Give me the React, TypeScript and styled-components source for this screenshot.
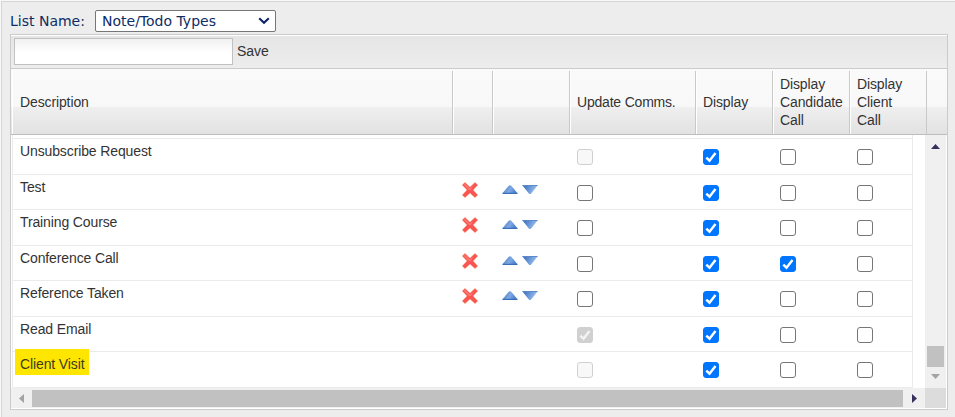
import React from 'react';
import styled, { createGlobalStyle, css } from 'styled-components';

const GlobalStyle = createGlobalStyle`
  * { box-sizing: border-box; }
  html, body { margin: 0; padding: 0; background: #f8f8f8; overflow: hidden; }
  body { font: 14px/18px "Liberation Sans", Arial, sans-serif; letter-spacing: -0.12px; color: #333; }
`;

const Page = styled.div`
  width: 955px;
  height: 417px;
  padding: 1px 0 0 1px;
`;

const Panel = styled.main`
  height: 416px;
  background: #ededed;
  border: 1px solid #d5d5d5;
  border-width: 1px 0 0 1px;
  padding: 8px 7px 0 8px;
`;

const ListBar = styled.label`
  display: flex;
  align-items: center;
  height: 22px;
  margin-bottom: 2px;
  font: 14px/20px "DejaVu Sans", Verdana, sans-serif;
  color: #0d2c66;
  letter-spacing: 0;
`;

const ListLabel = styled.span`
  width: 85px;
  white-space: nowrap;
`;

const Select = styled.span`
  display: flex;
  align-items: center;
  justify-content: space-between;
  width: 181px;
  height: 22px;
  padding: 0 5px 0 6px;
  background: #fff;
  border: 1px solid #767676;
  border-radius: 2px;
`;

const Grid = styled.section`
  display: flex;
  flex-direction: column;
  width: 938px;
  height: 376px;
  border: 1px solid #cbcbcb;
  background: #fff;
`;

const Toolbar = styled.div`
  display: flex;
  align-items: center;
  gap: 4px;
  flex: none;
  height: 34px;
  padding: 0 0 1px 3px;
  border-top: 1px solid #fff;
  border-bottom: 1px solid #cbcbcb;
  background: linear-gradient(#e5e5e5, #ededed);
`;

const NameInput = styled.input`
  width: 219px;
  height: 27px;
  border: 1px solid #c1c1c1;
  outline: none;
  background: linear-gradient(#f1f1f1, #fff 14px);
`;

const Save = styled.button`
  padding: 0;
  margin-top: -1px;
  border: 0;
  background: none;
  font: inherit;
  letter-spacing: 0;
  color: inherit;
`;

const Header = styled.div`
  display: grid;
  grid-template-columns: 441px 40px 77px 126px 77px 77px 77px 20px;
  flex: none;
  height: 66px;
  padding: 2px 0 0 1px;
  background: linear-gradient(#fafafa 0, #f8f8f8 38px, #efefef 38px, #e2e2e2 65px);
  border-bottom: 1px solid #bdbdbd;
`;

const HeadCell = styled.div`
  display: flex;
  align-items: center;
  padding: 0 12px 2px 6px;
  border-left: 1px solid #fff;
  border-right: 1px solid #c9c9c9;
  &:first-child { padding-left: 7px; }
  &:nth-child(4) { letter-spacing: -0.2px; }
  &:nth-child(6) { padding-right: 0; }
  &:last-child { border: 0; }
`;

const Viewport = styled.div`
  display: flex;
  flex: none;
  height: 253px;
`;

const Rows = styled.div`
  width: 902px;
  margin-right: 12px;
  padding-left: 1px;
`;

const Spacer = styled.div`
  height: 4px;
  border: 1px solid #ebebeb;
  border-width: 0 1px 1px 1px;
`;

const Row = styled.div`
  display: grid;
  grid-template-columns: 441px 40px 77px 126px 77px 77px 1fr;
  height: 35px;
  border: 1px solid #ebebeb;
  border-width: 0 1px 1px 1px;
  &:nth-child(even) { height: 36px; }
`;

const Description = styled.div`
  padding: 0 0 0 7px;
  line-height: 18px;
`;

const Mark = styled.span<{ $on: boolean }>`
  display: inline-block;
  height: 26px;
  margin: -3px 0 0 -5px;
  padding: 6px 5px 0;
  ${p => p.$on && css`background: #ffe600; color: #3e3b1e;`}
`;

const RemoveCell = styled.div`
  padding: 6px 0 0 7px;
`;

const MoveCell = styled.div`
  display: flex;
  gap: 4px;
  padding: 10px 0 0 8px;
`;

const CheckCell = styled.div`
  padding: 10px 0 0 6px;
`;

const Box = styled.span<{ $checked: boolean; $disabled: boolean }>`
  display: block;
  width: 16px;
  height: 16px;
  border: 1px solid ${p => (p.$disabled ? '#d0d0d0' : '#767676')};
  border-radius: 3px;
  background: ${p => (p.$disabled ? '#f8f8f8' : '#fff')};
  ${p => p.$checked && css`
    border-color: ${p.$disabled ? '#d0d0d0' : '#0075ff'};
    background: ${p.$disabled ? '#d0d0d0' : '#0075ff'};
    color: ${p.$disabled ? '#f3f3f3' : '#fff'};
  `}
  svg { display: block; }
`;

const VScroll = styled.div`
  display: flex;
  flex-direction: column;
  align-items: center;
  width: 21px;
  background: #f0f0f0;
`;

const VThumb = styled.div`
  width: 17px;
  height: 21px;
  margin-top: 197px;
  background: #c1c1c1;
`;

const HScroll = styled.div`
  display: flex;
  align-items: center;
  height: 20px;
  margin-right: 1px;
  background: #f0f0f0;
`;

const HThumb = styled.div`
  width: 871px;
  height: 17px;
  background: #c1c1c1;
`;

const Corner = styled.div`
  width: 21px;
  height: 20px;
  margin-left: auto;
  background: #dcdcdc;
`;

const Arrow = styled.svg`
  display: block;
  flex: none;
`;

const UpArrow = styled(Arrow)`margin-top: 9px;`;
const DownArrow = styled(Arrow)`margin-top: 7px;`;
const LeftArrow = styled(Arrow)`margin: 0 8px;`;
const RightArrow = styled(Arrow)`margin-left: 9px;`;

function Check({ on = false, disabled = false }: { on?: boolean; disabled?: boolean }) {
  return (
    <Box $checked={on} $disabled={disabled} role="checkbox" aria-checked={on} aria-disabled={disabled}>
      {on && (
        <svg width="14" height="14" viewBox="1 1 14 14" fill="none">
          <path d="M3.3 8.7 6.5 11.7 12.5 4" stroke="currentColor" strokeWidth="2.5" />
        </svg>
      )}
    </Box>
  );
}

function RemoveIcon() {
  return (
    <Arrow width="18" height="18" viewBox="0 0 18 18">
      <path d="M4 1.3 9 6l5-4.7 2.9 2.8L12.3 9l4.6 5-2.9 2.8L9 12.2l-5 4.6L1.1 14 5.8 9 1.1 4.1Z" fill="#fa5553" stroke="#f9c9a0" strokeWidth=".6" />
      <path d="m4.1 2.8 4.9 4.8 3-2.9L10 9H8L2.8 4.1Z" fill="#fb7874" />
    </Arrow>
  );
}

function MoveIcons() {
  return (
    <>
      <Arrow width="16" height="10" viewBox="0 0 16 10">
        <defs>
          <linearGradient id="up" x2="1" y2=".3"><stop stopColor="#3f72bd" /><stop offset=".6" stopColor="#7fa9e4" /><stop offset="1" stopColor="#4e82cc" /></linearGradient>
        </defs>
        <path d="M.5 8.2 6.7.8Q8-.3 9.3.8L15.5 8.2Z" fill="url(#up)" />
        <path d="M.5 8.4h15" stroke="#386fba" strokeWidth="1.2" />
      </Arrow>
      <Arrow width="16" height="10" viewBox="0 0 16 10">
        <defs>
          <linearGradient id="down" x2="1" y2=".3"><stop stopColor="#3467b4" /><stop offset=".65" stopColor="#76a2df" /><stop offset="1" stopColor="#a5c4ed" /></linearGradient>
        </defs>
        <path d="M.3.3h15.4L9.2 8.6Q8 9.6 6.8 8.6Z" fill="url(#down)" />
        <path d="M.5.5h15" stroke="#5b89cc" strokeWidth="1" />
      </Arrow>
    </>
  );
}

const headings = ['Description', '', '', 'Update Comms.', 'Display', 'Display Candidate Call', 'Display Client Call', ''];

type Item = { name: string; custom?: boolean; comms?: boolean; candidate?: boolean; marked?: boolean };

const items: Item[] = [
  { name: 'Unsubscribe Request' },
  { name: 'Test', custom: true },
  { name: 'Training Course', custom: true },
  { name: 'Conference Call', custom: true, candidate: true },
  { name: 'Reference Taken', custom: true },
  { name: 'Read Email', comms: true },
  { name: 'Client Visit', marked: true },
];

export default function App() {
  return (
    <Page>
      <GlobalStyle />
      <Panel>
        <ListBar>
          <ListLabel>List Name:</ListLabel>
          <Select>
            Note/Todo Types
            <svg width="12" height="8" viewBox="0 0 12 8" fill="none">
              <path d="m1.2 1.2 4.8 4.6 4.8-4.6" stroke="#0d2466" strokeWidth="2.1" />
            </svg>
          </Select>
        </ListBar>
        <Grid>
          <Toolbar>
            <NameInput aria-label="Description" />
            <Save>Save</Save>
          </Toolbar>
          <Header>
            {headings.map((text, i) => <HeadCell key={i}>{text}</HeadCell>)}
          </Header>
          <Viewport>
            <Rows>
              <Spacer />
              {items.map(item => (
                <Row key={item.name}>
                  <Description><Mark $on={!!item.marked}>{item.name}</Mark></Description>
                  <RemoveCell>{item.custom && <RemoveIcon />}</RemoveCell>
                  <MoveCell>{item.custom && <MoveIcons />}</MoveCell>
                  <CheckCell><Check on={item.comms} disabled={!item.custom} /></CheckCell>
                  <CheckCell><Check on /></CheckCell>
                  <CheckCell><Check on={item.candidate} /></CheckCell>
                  <CheckCell><Check /></CheckCell>
                </Row>
              ))}
            </Rows>
            <VScroll>
              <UpArrow width="9" height="5" viewBox="0 0 9 5"><path d="M0 5 4.5 0 9 5Z" fill="#37305c" /></UpArrow>
              <VThumb />
              <DownArrow width="9" height="5" viewBox="0 0 9 5"><path d="M0 0h9L4.5 5Z" fill="#a3a3a3" /></DownArrow>
            </VScroll>
          </Viewport>
          <HScroll>
            <LeftArrow width="5" height="9" viewBox="0 0 5 9"><path d="M5 0v9L0 4.5Z" fill="#a3a3a3" /></LeftArrow>
            <HThumb />
            <RightArrow width="5" height="9" viewBox="0 0 5 9"><path d="M0 0v9l5-4.5Z" fill="#37305c" /></RightArrow>
            <Corner />
          </HScroll>
        </Grid>
      </Panel>
    </Page>
  );
}
